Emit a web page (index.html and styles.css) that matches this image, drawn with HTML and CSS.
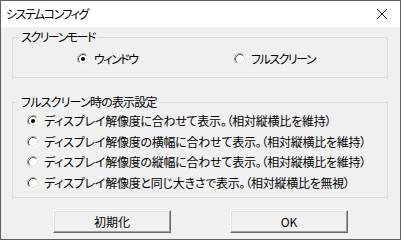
FILE: index.html
```html
<!DOCTYPE html>
<html>
  <head>
    <title>システムコンフィグ</title>
    <link rel="stylesheet" href="styles.css">
  </head>
  <body>
    <div class="window">
      <div class="titlebar">
        <span class="title">システムコンフィグ</span>
        <svg class="close" width="12" height="12" viewBox="0 0 12 12">
          <path d="M1 1 L11 11 M11 1 L1 11" stroke="#111" stroke-width="1" fill="none"/>
        </svg>
      </div>
      <div class="content">
        <fieldset class="group mode-group">
          <legend class="kana">スクリーンモード</legend>
          <div class="modes">
            <label class="option">
              <svg class="radio" width="12" height="12" viewBox="0 0 12 12">
                <circle cx="6" cy="6" r="5.5" fill="#fff"/>
                <path d="M2.11 9.89 A5.5 5.5 0 0 1 9.89 2.11" stroke="#a0a0a0" fill="none"/>
                <path d="M2.82 9.18 A4.5 4.5 0 0 1 9.18 2.82" stroke="#555" fill="none"/>
                <path d="M9.18 2.82 A4.5 4.5 0 0 1 2.82 9.18" stroke="#dcdcdc" fill="none"/>
                <circle cx="6" cy="6" r="2" fill="#000"/>
              </svg>
              <span class="kana">ウィンドウ</span>
            </label>
            <label class="option">
              <svg class="radio" width="12" height="12" viewBox="0 0 12 12">
                <circle cx="6" cy="6" r="5.5" fill="#fff"/>
                <path d="M2.11 9.89 A5.5 5.5 0 0 1 9.89 2.11" stroke="#a0a0a0" fill="none"/>
                <path d="M2.82 9.18 A4.5 4.5 0 0 1 9.18 2.82" stroke="#555" fill="none"/>
                <path d="M9.18 2.82 A4.5 4.5 0 0 1 2.82 9.18" stroke="#dcdcdc" fill="none"/>
              </svg>
              <span class="kana">フルスクリーン</span>
            </label>
          </div>
        </fieldset>

        <fieldset class="group display-group">
          <legend class="mixed">フルスクリーン時の表示設定</legend>
          <label class="option row">
            <svg class="radio" width="12" height="12" viewBox="0 0 12 12">
              <circle cx="6" cy="6" r="5.5" fill="#fff"/>
              <path d="M2.11 9.89 A5.5 5.5 0 0 1 9.89 2.11" stroke="#a0a0a0" fill="none"/>
              <path d="M2.82 9.18 A4.5 4.5 0 0 1 9.18 2.82" stroke="#555" fill="none"/>
              <path d="M9.18 2.82 A4.5 4.5 0 0 1 2.82 9.18" stroke="#dcdcdc" fill="none"/>
              <circle cx="6" cy="6" r="2" fill="#000"/>
            </svg>
            <span>ディスプレイ解像度に合わせて表示。（相対縦横比を維持）</span>
          </label>
          <label class="option row">
            <svg class="radio" width="12" height="12" viewBox="0 0 12 12">
              <circle cx="6" cy="6" r="5.5" fill="#fff"/>
              <path d="M2.11 9.89 A5.5 5.5 0 0 1 9.89 2.11" stroke="#a0a0a0" fill="none"/>
              <path d="M2.82 9.18 A4.5 4.5 0 0 1 9.18 2.82" stroke="#555" fill="none"/>
              <path d="M9.18 2.82 A4.5 4.5 0 0 1 2.82 9.18" stroke="#dcdcdc" fill="none"/>
            </svg>
            <span>ディスプレイ解像度の横幅に合わせて表示。（相対縦横比を維持）</span>
          </label>
          <label class="option row">
            <svg class="radio" width="12" height="12" viewBox="0 0 12 12">
              <circle cx="6" cy="6" r="5.5" fill="#fff"/>
              <path d="M2.11 9.89 A5.5 5.5 0 0 1 9.89 2.11" stroke="#a0a0a0" fill="none"/>
              <path d="M2.82 9.18 A4.5 4.5 0 0 1 9.18 2.82" stroke="#555" fill="none"/>
              <path d="M9.18 2.82 A4.5 4.5 0 0 1 2.82 9.18" stroke="#dcdcdc" fill="none"/>
            </svg>
            <span>ディスプレイ解像度の縦幅に合わせて表示。（相対縦横比を維持）</span>
          </label>
          <label class="option row">
            <svg class="radio" width="12" height="12" viewBox="0 0 12 12">
              <circle cx="6" cy="6" r="5.5" fill="#fff"/>
              <path d="M2.11 9.89 A5.5 5.5 0 0 1 9.89 2.11" stroke="#a0a0a0" fill="none"/>
              <path d="M2.82 9.18 A4.5 4.5 0 0 1 9.18 2.82" stroke="#555" fill="none"/>
              <path d="M9.18 2.82 A4.5 4.5 0 0 1 2.82 9.18" stroke="#dcdcdc" fill="none"/>
            </svg>
            <span>ディスプレイ解像度と同じ大きさで表示。（相対縦横比を無視）</span>
          </label>
        </fieldset>

        <div class="buttons">
          <button class="btn">初期化</button>
          <button class="btn">OK</button>
        </div>
      </div>
    </div>
  </body>
</html>
```

FILE: styles.css
```css
html, body {
  margin: 0;
  padding: 0;
}
body {
  font-family: "Noto Sans CJK JP", "DejaVu Sans", sans-serif;
  font-size: 12px;
  font-feature-settings: "palt";
  color: #000;
  background: #f0f0f0;
}
.window {
  width: 401px;
  height: 240px;
  box-sizing: border-box;
  border: 1px solid #5f5f5f;
  background: #f0f0f0;
}
.titlebar {
  height: 26px;
  background: #fff;
  display: flex;
  align-items: center;
  justify-content: space-between;
  padding: 0 12px 0 5px;
}
.title {
  line-height: 16px;
  letter-spacing: -1.5px;
}
/* katakana-heavy labels need to be tighter than the kanji rows */
.kana {
  letter-spacing: -1.5px;
}
.mixed {
  letter-spacing: -0.8px;
}
.content {
  padding: 3px 12px 0 11px;
}
.group {
  margin: 0;
  padding: 0;
  border: 1px solid #dcdcdc;
  min-width: 0;
}
.group legend {
  margin-left: 6px;
  padding: 0 2px;
  line-height: 14px;
}
.option {
  display: flex;
  align-items: center;
  gap: 5px;
  line-height: 16px;
}
.radio {
  flex: none;
}
.mode-group {
  height: 48px;
  box-sizing: border-box;
}
.modes {
  display: grid;
  grid-template-columns: 157px 1fr;
  padding: 7px 0 0 64px;
}
.display-group {
  margin-top: 17px;
  height: 103px;
  box-sizing: border-box;
}
.display-group .row {
  margin-left: 14px;
  height: 20.5px;
  letter-spacing: -0.25px;
}
.display-group .row:first-of-type {
  margin-top: 2px;
}
.buttons {
  display: flex;
  padding: 12px 0 0 41px;
  gap: 59px;
}
.btn {
  width: 118px;
  height: 23px;
  font-family: "Noto Sans CJK JP", "DejaVu Sans", sans-serif;
  font-size: 12px;
  color: #000;
  background: #f0f0f0;
  border: 1px solid;
  border-color: #fff #696969 #696969 #fff;
  box-shadow: inset -1px -1px #a0a0a0, inset 1px 1px #e3e3e3;
  padding: 0;
}
```
